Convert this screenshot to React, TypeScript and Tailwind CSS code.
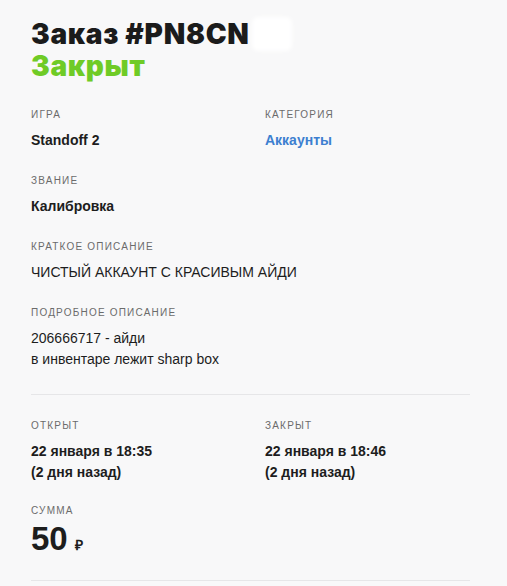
import React from "react";

const label = "text-[10px] uppercase tracking-[1.2px] text-[#6b6b6b] leading-[12px]";
const value = "mt-[9px] text-[14px] leading-[21px] text-[#1d1d1d]";

function Field({ title, children, className = "" }: { title: string; children: React.ReactNode; className?: string }) {
  return (
    <div className={className}>
      <div className={label}>{title}</div>
      <div className={value}>{children}</div>
    </div>
  );
}

export default function App() {
  return (
    <div
      className="min-h-[586px] w-[507px] bg-[#f8f8f9] pl-[31px] pr-[37px] pt-[17px]"
      style={{ fontFamily: '"Liberation Sans", Arial, sans-serif' }}
    >
      {/* Header */}
      <div style={{ fontFamily: "Inter, sans-serif" }}>
        <div className="flex items-center">
          <h1 className="text-[28px] font-black leading-[31px] tracking-[0.7px] text-[#1b1b1b]">
            Заказ #PN8CN
          </h1>
          <div className="ml-[2px] h-[34px] w-[40px] rounded-md bg-white blur-[2px]" />
        </div>
        <div className="text-[28px] font-black leading-[31px] tracking-[0.7px] text-[#6fcb26]">Закрыт</div>
      </div>

      <div className="mt-[27px] grid grid-cols-[234px_1fr] gap-y-[24px]">
        <Field title="Игра">
          <span className="font-bold">Standoff 2</span>
        </Field>
        <Field title="Категория">
          <span className="font-bold text-[#3d7fd0]">Аккаунты</span>
        </Field>
        <Field title="Звание" className="col-span-2">
          <span className="font-bold">Калибровка</span>
        </Field>
        <Field title="Краткое описание" className="col-span-2">
          ЧИСТЫЙ АККАУНТ С КРАСИВЫМ АЙДИ
        </Field>
        <Field title="Подробное описание" className="col-span-2">
          <div>206666717 - айди</div>
          <div>в инвентаре лежит sharp box</div>
        </Field>
      </div>

      <div className="mt-[24px] h-px bg-[#e6e6e8]" />

      <div className="mt-[25px] grid grid-cols-[234px_1fr] gap-y-[22px]">
        <Field title="Открыт">
          <span className="font-bold">
            22 января в 18:35
            <br />
            (2 дня назад)
          </span>
        </Field>
        <Field title="Закрыт">
          <span className="font-bold">
            22 января в 18:46
            <br />
            (2 дня назад)
          </span>
        </Field>
        <div className="col-span-2">
          <div className={label}>Сумма</div>
          <div className="mt-[3px] flex items-baseline font-bold text-[#1d1d1d]">
            <span className="text-[33px] leading-[38px]">50</span>
            <span className="ml-[7px] text-[14px]">₽</span>
          </div>
        </div>
      </div>

      <div className="mt-[22px] h-px bg-[#e6e6e8]" />
    </div>
  );
}
